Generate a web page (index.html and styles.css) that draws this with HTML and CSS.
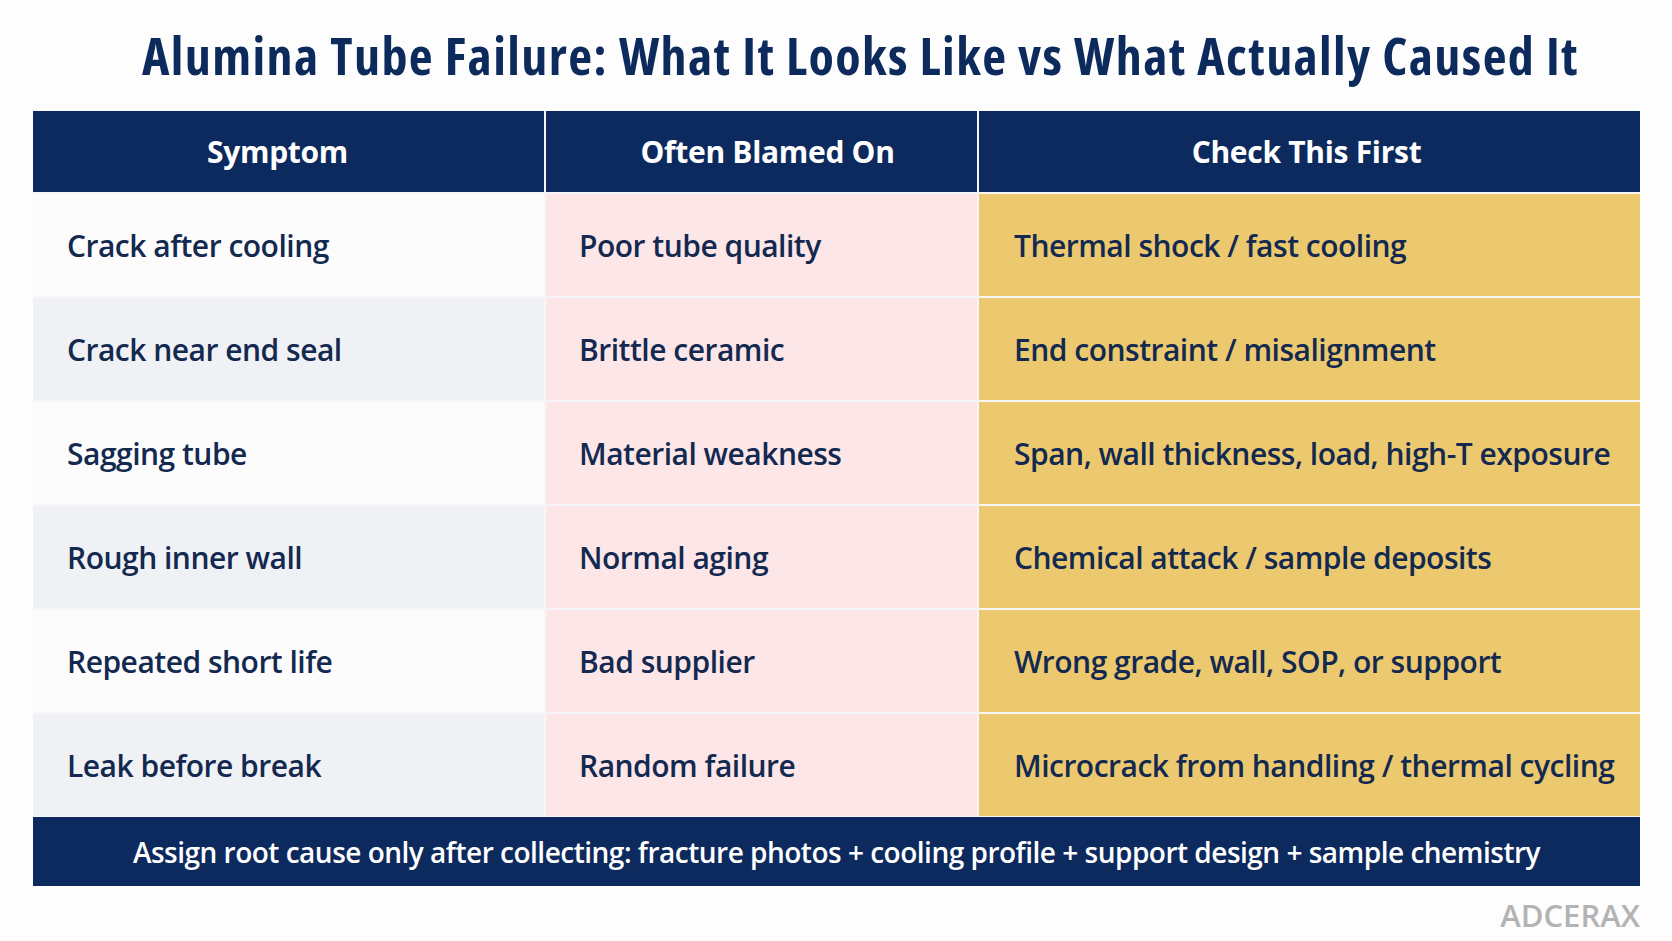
FILE: index.html
```html
<!DOCTYPE html>
<html lang="en">
<head>
<meta charset="utf-8">
<title>Alumina Tube Failure</title>
<link rel="stylesheet" href="styles.css">
</head>
<body>
<div class="page">
  <h1 class="title">Alumina Tube Failure: What It Looks Like vs What Actually Caused It</h1>
  <div class="table">
    <div class="th th1">Symptom</div>
    <div class="th th2">Often Blamed On</div>
    <div class="th th3">Check This First</div>

    <div class="td c1 odd">Crack after cooling</div>
    <div class="td c2">Poor tube quality</div>
    <div class="td c3">Thermal shock / fast cooling</div>

    <div class="td c1 even">Crack near end seal</div>
    <div class="td c2">Brittle ceramic</div>
    <div class="td c3">End constraint / misalignment</div>

    <div class="td c1 odd">Sagging tube</div>
    <div class="td c2">Material weakness</div>
    <div class="td c3">Span, wall thickness, load, high-T exposure</div>

    <div class="td c1 even">Rough inner wall</div>
    <div class="td c2">Normal aging</div>
    <div class="td c3">Chemical attack / sample deposits</div>

    <div class="td c1 odd">Repeated short life</div>
    <div class="td c2">Bad supplier</div>
    <div class="td c3">Wrong grade, wall, SOP, or support</div>

    <div class="td c1 even">Leak before break</div>
    <div class="td c2">Random failure</div>
    <div class="td c3">Microcrack from handling / thermal cycling</div>

    <div class="footer">Assign root cause only after collecting: fracture photos + cooling profile + support design + sample chemistry</div>
  </div>
  <div class="brand">ADCERAX</div>
</div>
</body>
</html>
```

FILE: styles.css
```css
* { box-sizing: border-box; }
html, body {
  margin: 0;
  padding: 0;
  background: #fdfdfd;
}
body {
  font-family: "Open Sans", "Lato", "Liberation Sans", sans-serif;
  font-stretch: 100%;
  color: #13294f;
}
.page {
  width: 1672px;
  height: 941px;
  padding: 0 32px 0 33px;
  display: flex;
  flex-direction: column;
}
.title {
  margin: 0;
  height: 111px;
  padding: 24px 0 0 48px;
  text-align: center;
  white-space: nowrap;
  font-size: 52px;
  line-height: 62px;
  font-weight: 700;
  font-stretch: 75%;
  letter-spacing: 1.4px;
  color: #0d2a5c;
}
.table {
  display: grid;
  grid-template-columns: 511px 431px 661px;
  grid-template-rows: 81px repeat(6, 102px) 68px;
  column-gap: 2px;
  row-gap: 2px;
  background: #f6f6f8;
  width: 1607px;
}
.th {
  background: #0c2a5e;
  color: #ffffff;
  font-size: 30px;
  font-weight: 700;
  letter-spacing: -0.3px;
  display: flex;
  align-items: center;
  justify-content: center;
}
.th1 { padding-right: 22px; }
.th2 { padding-left: 12px; }
.th3 { padding-right: 6px; }
.td {
  display: flex;
  align-items: center;
  font-size: 30px;
  font-weight: 600;
  letter-spacing: -0.5px;
  color: #13294f;
}
.c1 { padding-left: 34px; }
.c2 { padding-left: 33px; background: #fde6e8; }
.c3 { padding-left: 35px; background: #ecc96f; }
.odd { background: #fcfcfd; }
.even { background: #eff1f5; }
.footer {
  grid-column: 1 / -1;
  background: #0c2a5e;
  color: #ffffff;
  font-size: 28px;
  font-weight: 600;
  letter-spacing: -0.5px;
  display: flex;
  align-items: center;
  justify-content: center;
  margin-top: -1px;
}
.brand {
  align-self: flex-end;
  margin-top: 8px;
  font-size: 31px;
  font-weight: 600;
  color: #b3b3b3;
}
```
